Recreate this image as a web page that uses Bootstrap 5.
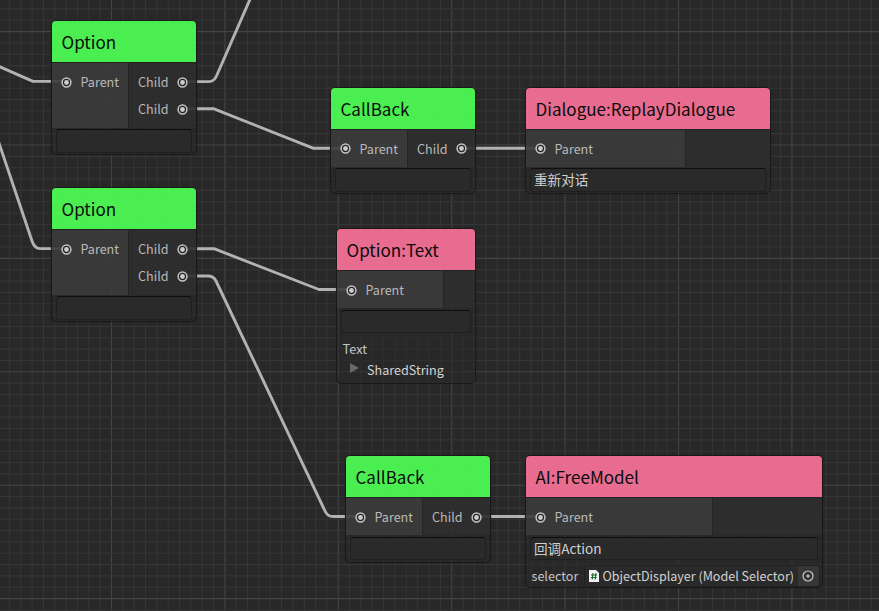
<!DOCTYPE html>
<html lang="zh">
<head>
<meta charset="utf-8">
<title>Dialogue Graph</title>
<link href="https://cdn.jsdelivr.net/npm/bootstrap@5.3.0/dist/css/bootstrap.min.css" rel="stylesheet">
<style>
body{background:#282828;font-family:"Noto Sans CJK SC",sans-serif;font-size:13.6px;line-height:20px;color:#c4c4c4}
.graph{width:879px;height:611px}
.wires{inset:0}
.node{border:1px solid #191919;border-radius:6px;background:rgba(40,40,40,.5);box-shadow:0 0 1px #1a1a1a;padding:0 0 2.5px}
.node-title{height:41px;padding:0 0 0 9.5px;font-size:17.05px;line-height:41px;color:#0c0c0c;border-radius:4px 4px 0 0;white-space:nowrap}
.green{background:rgba(75,243,83,.98)}
.pink{background:rgba(237,110,146,.98)}
.ports{border-top:1px solid #222;height:38px}
.ports.two{height:65.5px}
.inputs{background:rgba(61,61,61,.8);border-right:1px solid #242424;padding:9px 0 0 9px}
.outputs{background:rgba(46,46,46,.82);padding:9px 8px 0 0}
.port{height:20px;gap:8.5px;margin-bottom:7.2px;font-size:12.55px;color:#b9b9b9}
.port svg{width:11px;height:11px;flex:none}
.field{height:23.5px;margin:1.8px 4px 0;border:1px solid #202020;border-top:1.5px solid #0e0e0e;border-radius:3px;background:#2a2a2a;padding-left:3px;line-height:21.5px;color:#d0d0d0;white-space:nowrap}
.n1{left:51px;top:20px;width:146px;height:134.5px}
.n2{left:51px;top:187px;width:146px;height:134.5px}
.n3{left:330px;top:86.5px;width:146px;height:107.5px}
.n4{left:525px;top:86.5px;width:246px;height:107.5px}
.n5{left:336px;top:228px;width:140px;height:156px}
.n6{left:345px;top:455px;width:146px;height:107.5px}
.n7{left:525px;top:455px;width:298px;height:133px}
.w-a{width:76.5px}.w-b{width:159.5px}.w-c{width:107px}.w-d{width:186.5px}
.prop-label{padding:5.5px 0 0 5.5px;font-size:12.8px}
.foldout{padding:1px 0 0 13px;gap:8px;font-size:12.6px;color:#d2d2d2}
.selector-row{padding:4.5px 4px 0 5.5px}
.selector-row>span{width:52px;flex:none;font-size:12.6px}
.object-box{height:22px;border:1px solid #202020;border-radius:3px;background:#2a2a2a;padding-left:4px;gap:4px;font-size:12.55px;color:#d2d2d2;white-space:nowrap}
.picker{width:20.5px;flex:none;height:20px;background:#373737;border-radius:0 2px 2px 0}
</style>
<script src="https://cdn.jsdelivr.net/npm/bootstrap@5.3.0/dist/js/bootstrap.bundle.min.js"></script>
</head>
<body class="overflow-hidden">
<svg width="0" height="0" class="position-absolute"><defs>
<symbol id="dot" viewBox="0 0 11 11"><circle cx="5.5" cy="5.5" r="4.4" fill="#262626" stroke="#c4c4c4" stroke-width="1.5"/><circle cx="5.5" cy="5.5" r="2.4" fill="#cdcdcd"/></symbol>
</defs></svg>
<main class="graph position-relative overflow-hidden">
<svg class="wires position-absolute" width="879" height="611">
<g id="grid" fill="none"></g>
<g fill="none" stroke="#b2b2b2" stroke-width="2.9" stroke-linejoin="round">
<path d="M-2 66L33 81.4H66"/>
<path d="M-2 140L32 241Q34.500 248.600 40 248.600H66"/>
<path d="M182 81.600H209Q214 81.600 216.500 76L251 -3"/>
<path d="M182 108.800H214L313 148.200H345"/>
<path d="M461 148.200H540"/>
<path d="M182 248.700H214L319 289.500H351"/>
<path d="M182 276H208Q213.500 276 216 281L325 511Q327.500 516.500 333 516.500H360"/>
<path d="M477 516.500H540"/>
</g>
</svg>

<section class="node n1 position-absolute"><div class="node-title green">Option</div>
<div class="ports two d-flex"><div class="inputs w-a"><div class="port d-flex align-items-center"><svg><use href="#dot"/></svg>Parent</div></div>
<div class="outputs flex-grow-1"><div class="port d-flex align-items-center justify-content-end">Child<svg><use href="#dot"/></svg></div><div class="port d-flex align-items-center justify-content-end">Child<svg><use href="#dot"/></svg></div></div></div>
<div class="field"></div></section>

<section class="node n2 position-absolute"><div class="node-title green">Option</div>
<div class="ports two d-flex"><div class="inputs w-a"><div class="port d-flex align-items-center"><svg><use href="#dot"/></svg>Parent</div></div>
<div class="outputs flex-grow-1"><div class="port d-flex align-items-center justify-content-end">Child<svg><use href="#dot"/></svg></div><div class="port d-flex align-items-center justify-content-end">Child<svg><use href="#dot"/></svg></div></div></div>
<div class="field"></div></section>

<section class="node n3 position-absolute"><div class="node-title green">CallBack</div>
<div class="ports d-flex"><div class="inputs w-a"><div class="port d-flex align-items-center"><svg><use href="#dot"/></svg>Parent</div></div>
<div class="outputs flex-grow-1"><div class="port d-flex align-items-center justify-content-end">Child<svg><use href="#dot"/></svg></div></div></div>
<div class="field"></div></section>

<section class="node n4 position-absolute"><div class="node-title pink">Dialogue:ReplayDialogue</div>
<div class="ports d-flex"><div class="inputs w-b"><div class="port d-flex align-items-center"><svg><use href="#dot"/></svg>Parent</div></div><div class="outputs flex-grow-1"></div></div>
<div class="field">重新对话</div></section>

<section class="node n5 position-absolute"><div class="node-title pink">Option:Text</div>
<div class="ports d-flex"><div class="inputs w-c"><div class="port d-flex align-items-center"><svg><use href="#dot"/></svg>Parent</div></div><div class="outputs flex-grow-1"></div></div>
<div class="field"></div>
<div class="prop-label">Text</div>
<div class="foldout d-flex align-items-center"><svg width="9" height="14"><path d="M0 0L9 5L0 10Z" fill="#686868"/></svg>SharedString</div></section>

<section class="node n6 position-absolute"><div class="node-title green">CallBack</div>
<div class="ports d-flex"><div class="inputs w-a"><div class="port d-flex align-items-center"><svg><use href="#dot"/></svg>Parent</div></div>
<div class="outputs flex-grow-1"><div class="port d-flex align-items-center justify-content-end">Child<svg><use href="#dot"/></svg></div></div></div>
<div class="field"></div></section>

<section class="node n7 position-absolute"><div class="node-title pink">AI:FreeModel</div>
<div class="ports d-flex"><div class="inputs w-d"><div class="port d-flex align-items-center"><svg><use href="#dot"/></svg>Parent</div></div><div class="outputs flex-grow-1"></div></div>
<div class="field">回调Action</div>
<div class="selector-row d-flex align-items-center"><span>selector</span>
<div class="object-box d-flex align-items-center flex-grow-1"><svg width="10" height="12" viewBox="0 0 10 12"><path d="M0 0H7L10 3V12H0Z" fill="#f2f2f2"/><path d="M4 3L3.200 9.500M7 3L6.200 9.500M2 5H8M1.800 7.500H7.800" stroke="#17692b" stroke-width="1.100"/></svg>ObjectDisplayer (Model Selector)
<div class="picker ms-auto d-flex align-items-center justify-content-center"><svg width="12" height="12"><circle cx="6" cy="6" r="5" fill="none" stroke="#c8c8c8" stroke-width="1.200"/><circle cx="6" cy="6" r="1.500" fill="#c8c8c8"/></svg></div></div></div></section>
</main>
<script>
const grid = document.getElementById('grid'), step = 11.34;
function lines(origin, end, draw) {
  for (let i = -10; i < 80; i++) {
    const p = origin + i * step;
    if (p < -1 || p > end) continue;
    const path = document.createElementNS('http://www.w3.org/2000/svg', 'path');
    path.setAttribute('d', draw(p.toFixed(2)));
    path.setAttribute('stroke', i % 10 ? '#353535' : '#444444');
    path.setAttribute('stroke-width', '1.1');
    grid.append(path);
  }
}
lines(111.5, 880, p => `M${p} 0V611`);
lines(31.6, 612, p => `M0 ${p}H879`);
</script>
</body>
</html>
